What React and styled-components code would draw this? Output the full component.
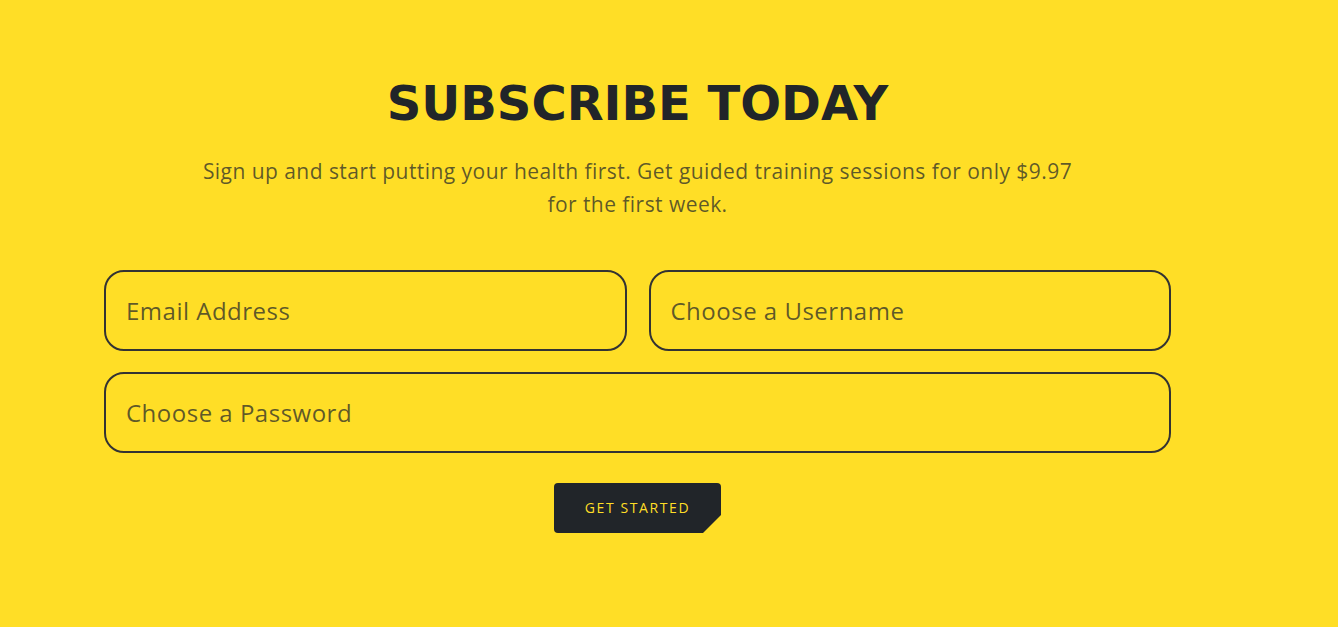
import styled, { createGlobalStyle } from "styled-components";

const GlobalStyle = createGlobalStyle`
  html, body {
    margin: 0;
    padding: 0;
    background: #ffde26;
  }
  * {
    box-sizing: border-box;
  }
`;

const Section = styled.section`
  min-height: 627px;
  background: #ffde26;
  padding: 73px 167px 0 104px;
  font-family: "Open Sans", "Liberation Sans", sans-serif;
`;

const Title = styled.h1`
  margin: 0;
  text-align: center;
  font-family: "DejaVu Sans", "Liberation Sans", sans-serif;
  font-weight: 700;
  font-size: 48px;
  line-height: 60px;
  letter-spacing: 0;
  color: #212529;
`;

const Lead = styled.p`
  margin: 22px auto 0;
  max-width: 890px;
  text-align: center;
  font-size: 21px;
  line-height: 33px;
  letter-spacing: 0.45px;
  color: rgba(33, 37, 41, 0.72);
`;

const Form = styled.form`
  margin-top: 49px;
  display: grid;
  grid-template-columns: 1fr 1fr;
  gap: 21px 22px;
`;

const Field = styled.input`
  grid-column: ${(p) => (p.$wide ? "1 / -1" : "auto")};
  height: 81px;
  width: 100%;
  padding: 0 20px;
  border: 2px solid #333333;
  border-radius: 20px;
  background: transparent;
  font-family: "Open Sans", "Liberation Sans", sans-serif;
  font-size: 24px;
  letter-spacing: 0.5px;
  color: #212529;
  outline: none;

  &::placeholder {
    color: rgba(33, 37, 41, 0.72);
  }
`;

const Actions = styled.div`
  grid-column: 1 / -1;
  display: flex;
  justify-content: center;
  padding-top: 9px;
`;

const Button = styled.button`
  width: 167px;
  height: 50px;
  padding: 0 0 2px;
  border: none;
  border-radius: 4px;
  background: #212529;
  color: #ffde26;
  font-family: "Open Sans", "Liberation Sans", sans-serif;
  font-size: 14px;
  letter-spacing: 1.6px;
  text-transform: uppercase;
  cursor: pointer;
  clip-path: polygon(0 0, 100% 0, 100% 32px, 149px 100%, 0 100%);
`;

export default function App() {
  return (
    <>
      <GlobalStyle />
      <Section>
        <Title>SUBSCRIBE TODAY</Title>
        <Lead>
          Sign up and start putting your health first. Get guided training
          sessions for only $9.97 for the first week.
        </Lead>
        <Form onSubmit={(e) => e.preventDefault()}>
          <Field type="email" placeholder="Email Address" />
          <Field type="text" placeholder="Choose a Username" />
          <Field $wide type="password" placeholder="Choose a Password" />
          <Actions>
            <Button type="submit">Get Started</Button>
          </Actions>
        </Form>
      </Section>
    </>
  );
}
